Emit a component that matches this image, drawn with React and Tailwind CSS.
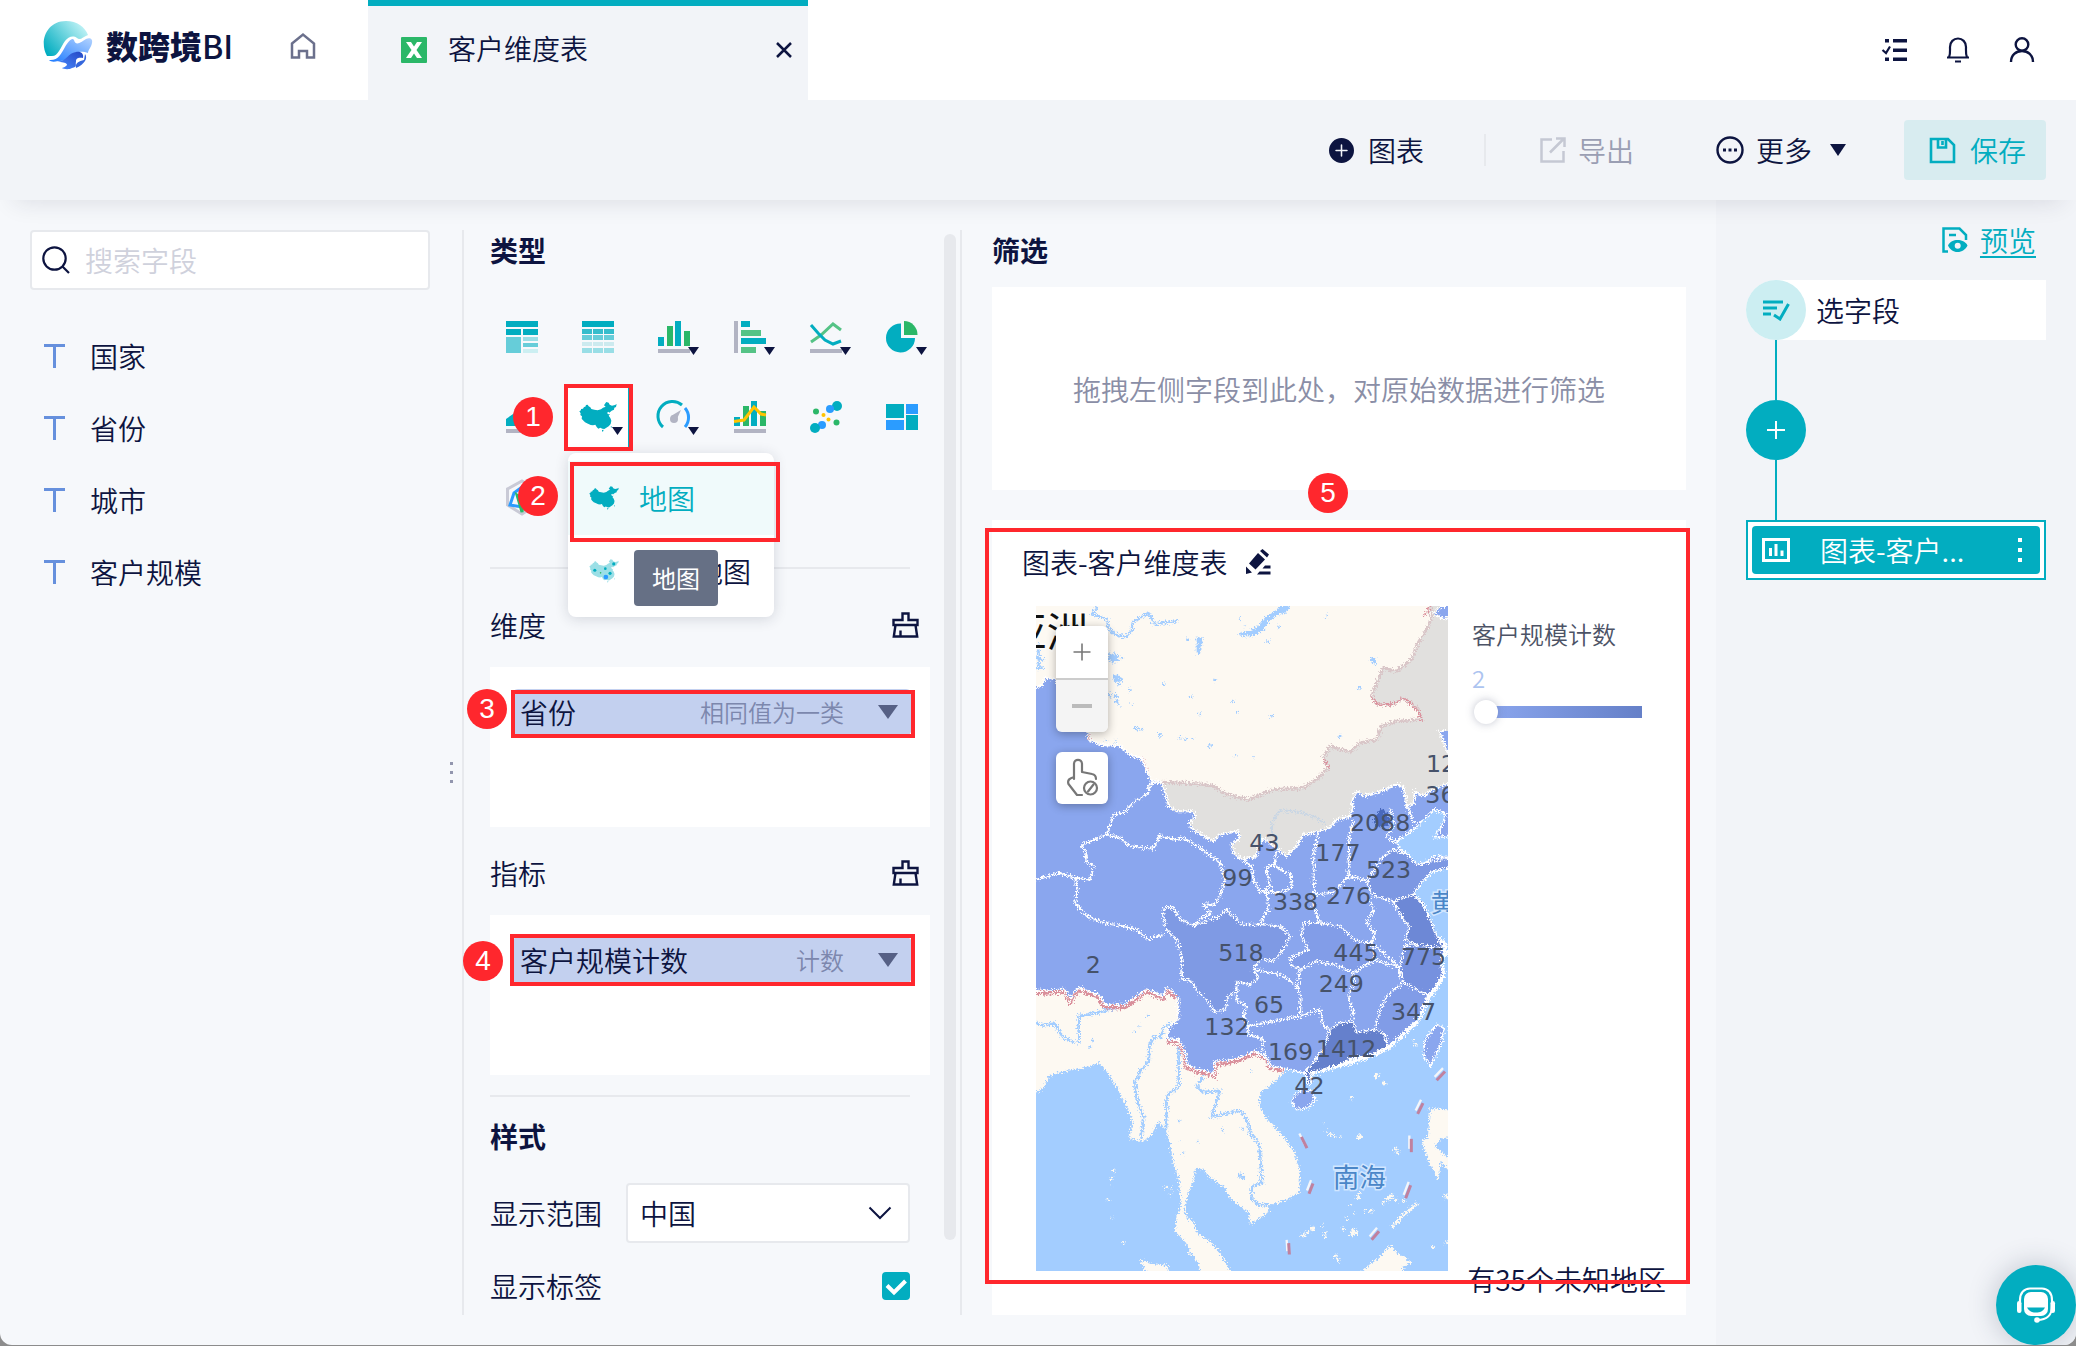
import React, { useState } from "react"
import { BsPlusCircleFill } from "react-icons/bs"

const fields = ["国家", "省份", "城市", "客户规模"]

const CHINA =
	"M1 28 L6 25 L6 21 L12 20 L15 15 L19 14 L21 9 L26 8 L29 13 L34 16 L37 21 L46 23 L56 25 L66 22 L72 17 L80 14 L75 10 L79 4 L82 0 L89 2 L92 8 L99 11 L108 9 L113 6 L111 15 L106 17 L105 23 L98 26 L91 32 L88 29 L84 33 L88 37 L93 36 L89 41 L94 48 L97 56 L95 66 L89 73 L82 77 L76 81 L70 80 L64 77 L58 80 L53 75 L49 68 L42 70 L35 69 L27 65 L18 61 L12 55 L8 50 L9 43 L4 39 L5 34 Z M69 84 L74 83 L72 89 L69 88 Z M95 74 L98 71 L97 79 Z"

function ChinaIcon({ className, dots }) {
	return (
		<svg viewBox="0 0 114 90" className={className}>
			<path d={CHINA} fill={dots ? "#9bdfe6" : "#02adc0"} />
			{dots && (
				<g fill="#02adc0">
					<circle cx="22" cy="42" r="6" />
					<circle cx="62" cy="36" r="5" />
					<circle cx="94" cy="18" r="6" />
					<circle cx="80" cy="54" r="6" />
					<circle cx="64" cy="68" r="9" fill="#2b9cff" />
					<circle cx="44" cy="52" r="3" fill="#2bb768" />
				</g>
			)}
		</svg>
	)
}

const chartTypes = [
	{
		name: "分组表",
		art: (
			<>
				<path fill="#02adc0" d="M0 0h32v6H0zM0 8h15v6H0zM17 8h15v6H17z" />
				<path fill="#66cdd9" d="M0 16h15v16H0zM17 22h15v4H17z" />
				<path fill="#99dee6" d="M17 16h15v4H17z" />
				<path fill="#cceff2" d="M17 28h15v4H17z" />
			</>
		),
	},
	{
		name: "明细表",
		art: (
			<>
				<path fill="#02adc0" d="M0 0h32v6H0z" />
				<path fill="#35bdcc" d="M0 8h10v5H0zM11 8h10v5H11zM22 8h10v5H22z" />
				<path fill="#66cdd9" d="M0 14h10v5H0zM11 14h10v5H11zM22 14h10v5H22z" />
				<path fill="#cceaef" d="M0 21h10v4H0zM11 21h10v4H11zM22 21h10v4H22z" />
				<path fill="#99dee6" d="M0 27h10v5H0zM11 27h10v5H11zM22 27h10v5H22z" />
			</>
		),
	},
	{
		name: "柱状图",
		menu: true,
		art: (
			<>
				<path fill="#02adc0" d="M0 16h6v9H0zM17 0h6v25h-6z" />
				<path fill="#2bb768" d="M9 5h6v20H9zM26 10h6v15h-6z" />
				<path fill="#b2b4c3" d="M0 28h32v4H0z" />
			</>
		),
	},
	{
		name: "条形图",
		menu: true,
		art: (
			<>
				<path fill="#b2b4c3" d="M0 0h4v32H0z" />
				<path fill="#02adc0" d="M7 0h9v6H7zM7 17h25v6H7z" />
				<path fill="#55c386" d="M7 9h20v6H7zM7 26h15v6H7z" />
			</>
		),
	},
	{
		name: "折线图",
		menu: true,
		art: (
			<>
				<path d="M1 21L11 14L23 3L31 9" fill="none" stroke="#55c386" strokeWidth="3" />
				<path d="M1 4L8 12L15 19L23 23L31 20" fill="none" stroke="#02adc0" strokeWidth="3" />
				<path fill="#b2b4c3" d="M0 28h32v4H0z" />
			</>
		),
	},
	{
		name: "饼图",
		menu: true,
		art: (
			<>
				<path fill="#02adc0" d="M15 2.500V17H29A14.500 14.500 0 1 1 15 2.500z" />
				<path fill="#2bb768" d="M18 0A13.500 13.500 0 0 1 31.500 14H18z" />
			</>
		),
	},
	{
		name: "面积图",
		art: (
			<>
				<path fill="#02adc0" d="M0 25V18L10 11L20 16L32 8V25z" />
				<path fill="#b2b4c3" d="M0 28h32v4H0z" />
			</>
		),
	},
	{ name: "地图", menu: true, active: true },
	{
		name: "仪表盘",
		menu: true,
		art: (
			<g fill="none" strokeWidth="3">
				<path d="M5 26A14.500 14.500 0 0 1 24 4" stroke="#02adc0" />
				<path d="M27 7A14.500 14.500 0 0 1 27 26" stroke="#2b9cff" />
				<path d="M13 15L23 9L18 20z" fill="#b2b4c3" />
				<circle cx="16" cy="18" r="4" fill="#b2b4c3" />
			</g>
		),
	},
	{
		name: "组合图",
		art: (
			<>
				<path fill="#02adc0" d="M0 16h6v9H0zM17 0h6v25h-6z" />
				<path fill="#2bb768" d="M9 5h6v20H9zM26 10h6v15h-6z" />
				<path d="M0 20.500L10 19L20 6L27 13L32 14" fill="none" stroke="#ffc300" strokeWidth="3" />
				<path fill="#b2b4c3" d="M0 28h32v4H0z" />
			</>
		),
	},
	{
		name: "散点图",
		art: (
			<>
				<circle cx="27" cy="5" r="5" fill="#02adc0" />
				<circle cx="20" cy="8" r="4" fill="#2b9cff" />
				<circle cx="6" cy="10.500" r="3" fill="#2bb768" />
				<circle cx="13.500" cy="14" r="2" fill="#ffc300" />
				<circle cx="18.500" cy="18.500" r="2" fill="#ffc300" />
				<circle cx="26.500" cy="21.500" r="3" fill="#2bb768" />
				<circle cx="12" cy="24" r="4" fill="#2b9cff" />
				<circle cx="5" cy="27" r="5" fill="#02adc0" />
			</>
		),
	},
	{
		name: "矩形树图",
		art: (
			<>
				<path fill="#02adc0" d="M0 3h18v14H0zM20 14h12v15H20z" />
				<path fill="#2b9cff" d="M20 3h12v10H20zM0 19h18v10H0z" />
			</>
		),
	},
	{
		name: "雷达图",
		art: (
			<g fill="none" strokeWidth="3">
				<path d="M16 0L30 8V24L16 33L1.500 24V8z" stroke="#c9cad6" />
				<path d="M16 6L25 16L16 26L4 24L8 12z" stroke="#2b9cff" />
				<path d="M11 14L18 18L16 31z" stroke="#2bb768" />
			</g>
		),
	},
]

function Marker({ n, className }) {
	return (
		<span
			className={`absolute z-40 flex h-10 w-10 items-center justify-center rounded-full bg-[#ff272d] font-['Liberation_Sans',sans-serif] text-[28px] leading-none text-white ${className}`}
		>
			{n}
		</span>
	)
}

function Frame({ className }) {
	return <span className={`pointer-events-none absolute z-30 border-4 border-[#ff272d] ${className}`} />
}

function Logo() {
	return (
		<svg viewBox="0 0 52 50" className="h-[50px] w-[52px]">
			<defs>
				<linearGradient id="sky" x1="0" y1="0.8" x2="0.9" y2="0.2">
					<stop offset="0" stopColor="#02adc0" />
					<stop offset="1" stopColor="#b9f0f4" />
				</linearGradient>
				<linearGradient id="wave" x1="0" y1="1" x2="1" y2="0">
					<stop offset="0" stopColor="#1e7bff" />
					<stop offset="1" stopColor="#b3d3ff" />
				</linearGradient>
				<linearGradient id="deep" x1="0" y1="1" x2="1" y2="0">
					<stop offset="0" stopColor="#4a8cff" />
					<stop offset="1" stopColor="#2447c4" />
				</linearGradient>
			</defs>
			<path d="M5 36C-3 22 4 1 24 1C35 1 43 7 46 15C41 17 38 21 35 18C31 15 26 17 23 21C18 28 16 37 9 36Z" fill="url(#sky)" />
			<path d="M7 40C16 41 19 34 23 27C26 22 30 17 32 20C34 27 39 22 44 19C48 17 51 19 50 23C49 28 46 30 46 33C41 31 34 31 30 35C27 39 22 41 16 41C12 42 9 42 7 40Z" fill="url(#wave)" />
			<path d="M15 42C25 41 26 33 34 32C39 31 42 34 41 38C34 37 34 40 34 42C33 44 36 47 30 48C27 50 21 49 20 48C29 45 25 42 15 42Z" fill="url(#deep)" />
			<path d="M43 34C46 38 43 44 34 48C33 43 37 41 42 40Z" fill="#3567dc" />
		</svg>
	)
}

function Header() {
	return (
		<header className="flex h-[100px] shrink-0 items-stretch bg-white">
			<a href="#home" className="flex w-[247px] items-center pb-2.5 pl-[42px]">
				<Logo />
				<span className="ml-3 text-[32px] leading-10 font-black">
					数跨境<span className="font-medium">BI</span>
				</span>
			</a>
			<button aria-label="首页" className="flex w-[121px] items-center pb-2 pl-[42px]">
				<svg viewBox="0 0 28 28" className="h-7 w-7" fill="none" stroke="#6b708c" strokeWidth="2.500">
					<path d="M3 11.500L14 2.500L25 11.500V25.500H18V19H10V25.500H3z" />
				</svg>
			</button>
			<div className="flex w-[440px] items-center border-t-[6px] border-[#02adc0] bg-[#f2f4f8] pr-4 pb-2.5 pl-[33px]">
				<svg viewBox="0 0 26 26" className="mt-1 h-[26px] w-[26px]">
					<rect width="26" height="26" rx="1" fill="#2bb768" />
					<path d="M5 5H10L13 9.500L16 5H21L15.500 13L21 21H16L13 16.500L10 21H5L10.500 13z" fill="#fff" />
				</svg>
				<span className="ml-[21px] flex-1 text-[28px] leading-10">客户维度表</span>
				<button aria-label="关闭" className="mt-1">
					<svg viewBox="0 0 16 16" className="h-4 w-4" stroke="#0d1440" strokeWidth="2.500">
						<path d="M1 1L15 15M15 1L1 15" />
					</svg>
				</button>
			</div>
			<nav className="ml-auto flex items-center gap-9 pr-10">
				<button aria-label="任务">
					<svg viewBox="0 0 28 28" className="h-7 w-7" fill="#0d1440">
						<path d="M13 3h14v3.500H13zM13 12.500h14V16H13zM13 21.500h14V25H13zM5 3h4v3.500H5zM5 21.500h4V25H5z" />
						<path d="M2.500 14L6 17L10 10.500" fill="none" stroke="#0d1440" strokeWidth="2.200" />
					</svg>
				</button>
				<button aria-label="通知">
					<svg viewBox="0 0 28 28" className="h-7 w-7" fill="none" stroke="#0d1440" strokeWidth="2.200">
						<path d="M3 21.500H25M5 21.500C6.500 18 6 15 6 11C6 6 9.500 2.500 14 2.500S22 6 22 11C22 15 21.500 18 23 21.500M11 25.500H17" />
					</svg>
				</button>
				<button aria-label="账户">
					<svg viewBox="0 0 28 28" className="h-7 w-7" fill="none" stroke="#0d1440" strokeWidth="2.400">
						<circle cx="14" cy="8.500" r="6.300" />
						<path d="M3 26C3 19 8 15 14 15S25 19 25 26" />
					</svg>
				</button>
			</nav>
		</header>
	)
}

function Toolbar() {
	return (
		<div className="relative z-10 flex h-[100px] shrink-0 items-center justify-end bg-[#f2f4f8] pr-[30px] text-[28px] leading-10 shadow-[0_16px_24px_-14px_rgba(30,35,60,0.12)]">
			<button className="flex items-center gap-3.5">
				<BsPlusCircleFill size={25} />
				图表
			</button>
			<span className="mr-[54px] ml-[60px] h-8 w-0.5 bg-[#e7e9ed]" />
			<button disabled className="flex items-center gap-3 text-[#9a9eb3]">
				<svg viewBox="0 0 26 26" className="h-[26px] w-[26px]" fill="none" stroke="#c5c8d3" strokeWidth="2.500">
					<path d="M12 2.500H1.500V24.500H23.500V14M10 15.500L23 2.500M16 1.500H24.500V10" />
				</svg>
				导出
			</button>
			<button className="ml-[82px] flex items-center">
				<svg viewBox="0 0 28 28" className="mr-3 h-7 w-7" fill="none" stroke="#0d1440" strokeWidth="2.400">
					<circle cx="14" cy="14" r="12.500" />
					<path d="M7 14h3M12.500 14h3M18 14h3" strokeWidth="3" />
				</svg>
				更多
				<svg viewBox="0 0 16 12" className="ml-[18px] h-3 w-4" fill="#0d1440">
					<path d="M0 0H16L8 12z" />
				</svg>
			</button>
			<button className="ml-[58px] flex h-[60px] w-[142px] items-center gap-3.5 rounded bg-[#d8ecf0] pl-[25px] text-[#02adc0]">
				<svg viewBox="0 0 27 27" className="h-[27px] w-[27px]" fill="none" stroke="#02adc0" strokeWidth="2.600">
					<path d="M2 2H19L25 8V25H2zM9 2V10.500H17V2M13.500 4V8" />
				</svg>
				保存
			</button>
		</div>
	)
}

function FieldPanel() {
	return (
		<aside className="relative w-[462px] shrink-0 pt-[30px] pr-8 pl-[30px]">
			<label className="flex h-[60px] items-center rounded border-2 border-[#e7e9ed] bg-white pl-2.5">
				<svg viewBox="0 0 28 28" className="h-7 w-7 shrink-0" fill="none" stroke="#0d1440" strokeWidth="2.200">
					<circle cx="12.500" cy="12.500" r="11.200" />
					<path d="M20.500 20.500L27 27" />
				</svg>
				<input
					aria-label="搜索字段"
					placeholder="搜索字段"
					className="ml-[15px] w-full bg-transparent text-[28px] leading-10 outline-none placeholder:text-[#cfd1dc]"
				/>
			</label>
			<ul className="mt-[30px]">
				{fields.map((f) => (
					<li key={f} className="flex h-[72px] items-center gap-[25px] pl-3.5 text-[28px] leading-10">
						<svg viewBox="0 0 21 24" className="h-6 w-[21px]" fill="none" stroke="#6690dd" strokeWidth="3">
							<path d="M0 1.500H21M10.500 1.500V24" />
						</svg>
						{f}
					</li>
				))}
			</ul>
			<span className="absolute top-[562px] right-[9px] flex flex-col gap-1.5 text-[#9296ae]">
				<i className="h-[3px] w-[3px] bg-current" />
				<i className="h-[3px] w-[3px] bg-current" />
				<i className="h-[3px] w-[3px] bg-current" />
			</span>
		</aside>
	)
}

function MapMenu() {
	return (
		<div className="absolute top-[68px] left-0.5 z-20 w-[206px] rounded-lg bg-white pt-2 pb-2.5 text-[28px] leading-10 shadow-[0_2px_14px_rgba(30,35,60,0.16)]">
			<button className="flex h-[74px] w-full items-center gap-5 bg-[#f0fafb] pl-[21px] text-[#02adc0]">
				<ChinaIcon className="h-6 w-[30px]" />
				地图
			</button>
			<button className="flex h-[72px] w-full items-center gap-5 pl-[21px]">
				<ChinaIcon className="h-6 w-[30px]" dots />
				气泡地图
			</button>
			<span
				role="tooltip"
				className="absolute top-[97px] left-[66px] flex h-14 w-[84px] items-center justify-center rounded bg-[#667085] text-2xl font-normal text-white"
			>
				地图
			</span>
			<Frame className="top-[9px] -right-1.5 left-0.5 h-20" />
		</div>
	)
}

function TypeGrid() {
	return (
		<div className="relative mt-[35px] grid grid-cols-[repeat(6,64px)] gap-x-3 gap-y-4">
			{chartTypes.map((t) => (
				<div key={t.name} className="relative h-16">
					<button
						aria-label={t.name}
						className={`flex h-16 w-16 items-center justify-center border-2 ${t.active ? "border-[#02adc0] bg-white" : "border-transparent"}`}
					>
						{t.active ? (
							<ChinaIcon className="h-[30px] w-[38px]" />
						) : (
							<svg viewBox="0 0 32 32" className="h-8 w-8 overflow-visible">
								{t.art}
							</svg>
						)}
					</button>
					{t.menu && (
						<svg viewBox="0 0 11 8" className="absolute top-[42px] left-[46px] h-2 w-[11px]" fill="#0d1440">
							<path d="M0 0H11L5.500 8z" />
						</svg>
					)}
					{t.active && (
						<>
							<Frame className="-top-px -right-[3px] -bottom-0.5 -left-0.5" />
							<MapMenu />
						</>
					)}
				</div>
			))}
			<Marker n={1} className="top-[92px] left-[23px]" />
			<Marker n={2} className="top-[171px] left-7" />
		</div>
	)
}

function DropZone({ title, field, method, children, className }) {
	return (
		<section className={className}>
			<div className="flex items-center justify-between pr-[11px]">
				<h3 className="text-[28px] leading-10">{title}</h3>
				<button aria-label={`清空${title}`}>
					<svg viewBox="0 0 27 26" className="h-[26px] w-[27px]" fill="none" stroke="#0d1440" strokeWidth="2.400">
						<path d="M10.500 8V1.500H16.500V8H25.500V13H1.500V8zM3.500 13L1.800 24.500H25.200L23.500 13M8.500 24V18.500" />
					</svg>
				</button>
			</div>
			<div className="mt-[22px] h-40 bg-white pt-[22px] pr-[18px] pl-[22px]">
				<div className="relative">
					<button className="flex h-[46px] w-full items-center rounded-md bg-[#c3d0ef] pr-3.5 pl-2">
						<span className="flex-1 text-left text-[28px] leading-10">{field}</span>
						<span className="text-2xl text-[#7c87ad]">{method}</span>
						<svg viewBox="0 0 20 14" className="ml-[34px] h-3.5 w-5" fill="#566085">
							<path d="M0 0H20L10 14z" />
						</svg>
					</button>
					{children}
				</div>
			</div>
		</section>
	)
}

function ConfigPanel() {
	const [range, setRange] = useState("中国")
	const [showLabel, setShowLabel] = useState(true)

	return (
		<section className="relative my-[30px] w-[500px] shrink-0 border-x-2 border-[#e7e9ed] pr-[30px] pl-[26px]">
			<h2 className="text-[28px] leading-10 font-bold">类型</h2>
			<TypeGrid />
			<hr className="mt-[38px] mr-5 border-t-2 border-[#e7e9ed]" />

			<DropZone title="维度" field="省份" method="相同值为一类" className="mt-9">
				<Frame className="top-px -right-[3px] -bottom-[3px] -left-px" />
				<Marker n={3} className="top-0 -left-[45px]" />
			</DropZone>
			<DropZone title="指标" field="客户规模计数" method="计数" className="mt-[26px]">
				<Frame className="-top-[3px] -right-[3px] -bottom-[3px] -left-0.5" />
				<Marker n={4} className="top-1 -left-[49px]" />
			</DropZone>

			<hr className="mt-5 mr-5 border-t-2 border-[#e7e9ed]" />
			<h2 className="mt-[19px] text-[28px] leading-10 font-bold">样式</h2>
			<div className="mt-[27px] mr-5 flex items-center justify-between">
				<label htmlFor="range" className="text-[28px] leading-10">
					显示范围
				</label>
				<div className="relative">
					<select
						id="range"
						value={range}
						onChange={(e) => setRange(e.target.value)}
						className="block h-[60px] w-[284px] appearance-none rounded border-2 border-[#e7e9ed] bg-white pl-3 text-[28px] leading-10"
					>
						<option>中国</option>
						<option>世界</option>
					</select>
					<svg
						viewBox="0 0 24 14"
						className="pointer-events-none absolute top-[23px] right-[18px] h-3.5 w-6"
						fill="none"
						stroke="#0d1440"
						strokeWidth="2"
					>
						<path d="M1.500 1.500L12 12L22.500 1.500" />
					</svg>
				</div>
			</div>
			<div className="mt-[23px] mr-5 flex items-center justify-between">
				<label htmlFor="show-label" className="text-[28px] leading-10">
					显示标签
				</label>
				<div className="relative">
					<input
						id="show-label"
						type="checkbox"
						checked={showLabel}
						onChange={(e) => setShowLabel(e.target.checked)}
						className="block h-7 w-7 appearance-none rounded border-2 border-[#02adc0] bg-white checked:bg-[#02adc0]"
					/>
					<svg
						viewBox="0 0 28 28"
						className="pointer-events-none absolute inset-0 h-7 w-7"
						fill="none"
						stroke="#fff"
						strokeWidth="4"
					>
						<path d="M5 13.500L12 20.500L23.500 9" />
					</svg>
				</div>
			</div>
			<span className="absolute top-1 right-1 bottom-[75px] w-3 rounded-full bg-[#e7e9ed]" />
		</section>
	)
}

const labels = [
	[1218, 546, "12"],
	[1216, 639, "36"],
	[990, 724, "2088"],
	[688, 783, "43"],
	[886, 813, "177"],
	[1038, 866, "523"],
	[607, 890, "99"],
	[918, 944, "276"],
	[759, 962, "338"],
	[595, 1115, "518"],
	[940, 1115, "445"],
	[1143, 1127, "775"],
	[197, 1151, "2"],
	[896, 1206, "249"],
	[702, 1269, "65"],
	[1113, 1290, "347"],
	[553, 1335, "132"],
	[888, 1401, "1412"],
	[744, 1412, "169"],
	[823, 1514, "42"],
]

// dashes of the sea border: x1, y1, x2, y2
const seaDashes = [
	[1250, 1472, 1275, 1446],
	[1193, 1573, 1209, 1541],
	[1174, 1648, 1174, 1688],
	[1157, 1826, 1172, 1787],
	[1055, 1951, 1077, 1925],
	[806, 1961, 808, 1995],
	[867, 1813, 879, 1782],
	[844, 1642, 861, 1676],
]

const lakes = [
	[281, 205, 14], [306, 205, 4], [290, 266, 10], [300, 270, 7], [298, 284, 4], [270, 318, 7], [288, 320, 7], [290, 335, 5],
	[328, 301, 4], [333, 344, 3], [298, 345, 3], [430, 284, 4], [502, 151, 4], [586, 271, 4], [514, 320, 4], [640, 337, 4],
	[652, 367, 4], [538, 374, 4], [755, 380, 4], [743, 156, 4], [918, 79, 4], [676, 108, 3], [660, 86, 3], [778, 112, 4],
	[1060, 213, 8], [1066, 222, 5], [1016, 295, 6], [960, 440, 4], [350, 418, 6], [366, 420, 4], [420, 436, 6], [480, 446, 4],
	[496, 451, 4], [520, 446, 3], [570, 469, 6], [647, 499, 3], [700, 506, 3], [255, 452, 4], [286, 458, 4], [382, 1277, 4],
	[358, 1308, 3], [218, 1352, 4], [346, 1326, 3], [478, 1594, 4], [478, 1656, 3], [533, 1656, 3], [610, 1622, 5], [667, 1617, 4],
	[490, 1690, 4], [660, 1757, 8], [672, 1765, 6], [696, 1446, 3], [210, 1374, 4],
]

const islets = [
	[1070, 1459, 8], [1093, 1482, 6], [994, 1526, 4], [912, 1598, 3], [932, 1636, 6], [944, 1640, 5], [1018, 1642, 8], [921, 1626, 4],
	[962, 1642, 4], [1128, 1680, 6], [1133, 1690, 5], [1018, 1812, 5], [1014, 1823, 6], [1090, 1840, 5], [1115, 1820, 6], [1104, 1828, 6],
	[1128, 1832, 4], [1152, 1834, 5], [1052, 1864, 6], [1036, 1862, 3], [993, 1846, 3], [980, 1890, 4], [1000, 1874, 3], [970, 1918, 5],
	[915, 1930, 5], [916, 1942, 4], [877, 1918, 7], [862, 1930, 6], [850, 1938, 6], [910, 1908, 4], [1003, 1927, 9], [995, 1935, 6],
	[948, 2000, 5], [954, 2012, 5], [1188, 1366, 5], [282, 1742, 5], [276, 1766, 4], [275, 1790, 3], [264, 1831, 4], [310, 1960, 4],
	[274, 1885, 3], [437, 1793, 4], [455, 1797, 4], [452, 1814, 3], [508, 1993, 4], [1280, 1820, 7], [1276, 1960, 5], [1238, 1974, 5],
	[1180, 1350, 3], [312, 1512, 6], [302, 1524, 4], [50, 1452, 3],
]

function MapDrawing() {
	return (
		<svg viewBox="48 48 1236 1998" preserveAspectRatio="xMidYMid slice" className="absolute inset-0 h-full w-full font-normal">
			<defs>
				<filter id="coast" x="0" y="0" width="100%" height="100%">
					<feTurbulence type="fractalNoise" baseFrequency="0.2" numOctaves="2" seed="4" />
					<feDisplacementMap in="SourceGraphic" scale="24" xChannelSelector="R" yChannelSelector="G" />
				</filter>
			</defs>
			<rect x="48" y="48" width="1236" height="1998" fill="#a3cdff" />
			<g filter="url(#coast)">
				<path d="M20 20H1310V700H1100V900H20z" fill="#fdf9f2" />
				{/* rivers and lakes of the north */}
				<g fill="none" stroke="#a3cdff" strokeWidth="7">
					<path d="M232 52L215 75L240 80L265 95L262 110L275 130L315 142L335 125L338 98L385 70L405 104L475 95" />
					<path d="M265 190L268 215M56 160V236M48 205L72 212M48 236L72 234" />
				</g>
				<path d="M650 132L685 124L715 110L735 84L760 68L780 50L815 42L800 68L775 76L745 98L728 124L700 140L670 140z" fill="#a3cdff" />
				<path d="M530 145L548 143L546 172L538 196L530 190z" fill="#a3cdff" />

				{/* Indochina */}
				<path
					d="M20 1180H800L792 1450L750 1490L722 1508L718 1550L740 1588L790 1640L825 1690L840 1750L838 1808L800 1830L745 1850L750 1865L715 1888L690 1906L687 1870L660 1850L630 1825L615 1795L570 1765L550 1740L525 1736L522 1770L505 1810L493 1860L500 1885L520 1895L530 1930L570 1955L600 1990L640 2060H545L535 2020L510 1985L498 1960L465 1925L470 1880L483 1850L475 1760L460 1720L450 1660L437 1622L415 1596L395 1635L368 1656L328 1646L338 1600L325 1560L300 1510L270 1460L238 1420L190 1436L130 1445L85 1460L75 1490L20 1530z"
					fill="#fdf9f2"
				/>
				<path d="M360 2010L400 2024L440 2028L452 2060H385L368 2030z" fill="#fdf9f2" />
				<path d="M1010 2060L1050 2024L1072 2010L1110 1966L1130 1990L1178 2020L1148 2030L1155 2060z" fill="#fdf9f2" />
				<path d="M1230 1556L1300 1560V1640L1262 1648L1245 1672L1284 1704L1300 1760L1262 1716L1256 1774L1228 1720L1205 1655L1224 1640z" fill="#fdf9f2" />
				<path d="M1115 1915L1150 1876L1192 1842" stroke="#fdf9f2" strokeWidth="9" fill="none" />
				<g fill="none" stroke="#a3cdff" strokeWidth="8">
					<path d="M176 1362V1280L230 1270L300 1252L340 1228L375 1212" />
					<path d="M48 1300L70 1308L104 1302L125 1340L162 1358" />
					<path d="M452 1300L430 1315L424 1342L400 1345L388 1370L386 1420L362 1442L346 1480L350 1530L370 1580L364 1650" />
					<path d="M476 1352V1490L440 1520L438 1622" />
					<path d="M550 1460L530 1490L548 1508L600 1504L575 1582L660 1562L685 1600L690 1630L718 1665L726 1780L695 1792L694 1826L715 1846L760 1848" />
				</g>

				{/* areas without data */}
				<path
					d="M425 578L540 583L580 590L620 615L685 630L760 600L850 595L890 570L925 535L910 505L930 470L990 487L1020 460L1070 450L1085 410L1130 395L1203 390L1195 360L1150 325L1120 345L1070 345L1055 320L1070 280L1090 235L1130 245L1175 210L1190 170L1225 110L1235 85L1225 30L1310 20V700H1100V860H425z"
					fill="#e1e0de"
					stroke="#d9c6c8"
					strokeWidth="8"
				/>
				<path d="M1055 322L1072 345L1120 343L1150 324L1195 365L1203 392M912 508L928 535M206 430L210 452M366 506L388 560M1212 78L1232 50" fill="none" stroke="#dc8f9b" strokeWidth="5" />
				<path d="M755 730L757 700L780 662L830 666L880 680L915 702" fill="none" stroke="#c9d6e4" strokeWidth="6" />

				{/* border shadow of the south */}
				<path
					d="M48 1212L135 1207L150 1238L175 1202L235 1222L255 1254H315L345 1232L380 1207L430 1228L440 1202L470 1225M440 1358L475 1358L492 1390L498 1432L530 1447L585 1460V1424L620 1422L660 1412L705 1392L740 1410L750 1436L790 1444"
					fill="none"
					stroke="#d98f9b"
					strokeWidth="10"
				/>

				{/* provinces */}
				<path
					d="M20 300L65 290L75 265L105 268L140 310L170 400L205 430L205 450L240 466L300 470L330 495L365 507L392 572L425 578L440 625L445 650L470 665L520 665L525 685L505 700L520 720L560 745L580 755L600 735L655 725L660 745L635 765L640 790L665 810L710 800L715 770L730 745L760 770L800 800L830 770L850 735L880 730L930 715L950 690L990 682L1000 650L995 640L1010 605L1030 620L1080 606L1130 585L1150 592L1160 650L1180 645L1185 605L1210 620L1240 600L1310 570V830L1235 845L1200 882L1180 915L1210 945L1230 990L1250 1040L1275 1060L1280 1090L1265 1120L1270 1155L1255 1185L1230 1215L1215 1250L1195 1290L1160 1325L1120 1360L1085 1390L1040 1400L1000 1405L960 1425L900 1445L870 1450L875 1480L860 1480L855 1450L810 1440L750 1430L740 1405L705 1385L660 1405L620 1415L585 1415L580 1455L560 1445L530 1440L500 1425L495 1390L475 1350L440 1350L445 1315L475 1290L475 1225L455 1205L440 1195L430 1220L380 1200L345 1225L315 1246L255 1245L235 1215L175 1195L150 1230L135 1200L20 1205z"
					fill="#8aa6ee"
					stroke="#fff"
					strokeWidth="6"
				/>
				<g stroke="#fff" strokeWidth="5">
					<path d="M435 1015L430 955L460 955L480 990L520 1010L600 980L620 960L665 1005L720 1005L780 1010L810 1040L790 1080L760 1115L720 1110L700 1140L715 1165L690 1185L650 1175L650 1205L625 1220L615 1260L585 1268L560 1230L530 1200L510 1170L487 1172L485 1100L470 1050z" fill="#7f9ae4" />
					<path d="M1040 880L1080 810L1120 780L1165 795L1190 825L1215 820L1310 800V832L1235 845L1200 885L1180 915L1120 935L1060 920z" fill="#7d98e3" />
					<path d="M1120 935L1180 915L1210 945L1230 990L1250 1040L1275 1060L1265 1075L1200 1070L1155 1050L1170 1010L1150 990z" fill="#6d88d6" />
					<path d="M1155 1065L1200 1070L1265 1075L1275 1100L1265 1120L1270 1155L1255 1185L1225 1215L1200 1205L1150 1180L1140 1135z" fill="#7691df" />
					<path d="M850 1000L900 1000L960 1010L1010 1055L1055 1060L1065 1110L1000 1150L960 1130L890 1115L840 1140L815 1130L810 1105L865 1080L845 1040z" fill="#829de8" />
					<path d="M1150 1180L1200 1205L1225 1217L1195 1290L1160 1325L1100 1372L1095 1335L1065 1320L1080 1260L1100 1220z" fill="#819ce7" />
					<path d="M930 1320L960 1300L1000 1297L1010 1330L1065 1320L1095 1335L1100 1370L1085 1390L1040 1400L1000 1405L960 1425L900 1445L870 1450L875 1480L860 1480L858 1440L880 1420L915 1370z" fill="#6580cc" />
					<path d="M1250 1305L1272 1315L1265 1360L1245 1400L1232 1430L1210 1395L1215 1350z" fill="#8aa6ee" />
					<path d="M850 1500L880 1505L885 1530L865 1555L830 1560L815 1535L825 1515z" fill="#8aa6ee" />
					<path d="M1240 72L1265 50L1310 50V80L1270 88z" fill="#8aa6ee" />
					<path d="M1258 425L1310 425V490L1284 490L1270 455z" fill="#8aa6ee" />
				</g>
				<path d="M1086 655L1110 682L1102 712L1068 714L1060 690z" fill="#4a69bd" />
				<g fill="none" stroke="#fff" strokeWidth="6" strokeLinejoin="round">
					<path d="M425 578L390 582L385 610L340 640L310 670L280 675L260 735L185 767L200 790L196 815L222 830L210 870L165 865L120 850L48 870" />
					<path d="M260 735L300 745L330 770L400 778L420 738L460 750L490 745L540 775L600 820L615 870L600 920L585 945L550 945L572 972L545 985L520 1010" />
					<path d="M165 865L172 900L165 940L200 980L250 1000L310 1010L350 1020L385 1050L430 1035" />
					<path d="M665 810L695 830L700 870L722 910L750 890L738 835L765 822L768 785M765 830L812 855L815 895L770 910L740 905L745 960L720 1004" />
					<path d="M895 730L880 800L882 915L880 945L900 1000M882 915L940 910L985 860L1042 872M1000 690L988 745L985 858" />
					<path d="M1055 1060L1065 1030L1040 1000L1062 960L1050 930M1120 935L1150 990M1055 1060L1130 1125L1150 1180M1065 1110L1140 1135" />
					<path d="M700 1140L780 1155L805 1170L832 1195L840 1140M650 1205L650 1232L678 1250L670 1280L685 1310L760 1295L840 1280L842 1220L832 1195" />
					<path d="M685 1310L682 1332L732 1350L725 1375L740 1405M840 1280L900 1260L910 1310L930 1320" />
					<path d="M1000 1150L1002 1180L985 1220L1000 1270L1000 1300M1110 655L1122 705L1098 740L1130 760M1160 650L1190 715" />
				</g>
				<path d="M1245 660L1276 672L1270 700L1245 745L1310 738V800L1240 802L1215 820L1190 825L1165 795L1135 772L1130 755L1180 720L1210 690z" fill="#a3cdff" stroke="#fff" strokeWidth="5" />
				<g fill="none" stroke="#fff" strokeWidth="11" strokeLinejoin="round">
					<path d="M1255 1050L1278 1068L1266 1120L1270 1160L1250 1192L1222 1232L1195 1292L1150 1335L1100 1378L1040 1404L950 1432L870 1452" />
				</g>
				<g fill="#a3cdff">
					{lakes.map(([x, y, r]) => (
						<circle key={`${x}-${y}`} cx={x} cy={y} r={r} />
					))}
				</g>
				<g fill="#fdf9f2">
					{islets.map(([x, y, r]) => (
						<circle key={`${x}-${y}`} cx={x} cy={y} r={r} />
					))}
				</g>
			</g>
			{seaDashes.map(([x1, y1, x2, y2]) => (
				<g key={x1} strokeWidth="9">
					<line x1={x1 - 6} y1={y1 - 10} x2={x2 - 6} y2={y2 - 10} stroke="#f4f6fa" strokeWidth="7" />
					<line x1={x1} y1={y1} x2={x2} y2={y2} stroke="#c0819f" />
				</g>
			))}
			<g className="font-['Noto_Sans_CJK_SC',sans-serif]" paintOrder="stroke" stroke="#fff" strokeOpacity="0.5">
				<text x="-44" y="172" fontSize="124" fill="#111" strokeWidth="10">
					亚洲
				</text>
				<text x="938" y="1792" fontSize="80" fill="#4a86c8" strokeWidth="9">
					南海
				</text>
				<text x="1232" y="966" fontSize="76" fill="#4a86c8" strokeWidth="9">
					黄海
				</text>
			</g>
			<g className="font-['DejaVu_Sans',sans-serif]" fontSize="71" fill="#46526a">
				{labels.map(([x, y, n]) => (
					<text key={n} x={x} y={y}>
						{n}
					</text>
				))}
			</g>
		</svg>
	)
}

function RegionMap() {
	return (
		<div className="relative flex-1 overflow-hidden">
			<MapDrawing />
			<div className="absolute top-5 left-5 w-[52px]">
				<div className="overflow-hidden rounded-md shadow-[0_2px_10px_rgba(0,0,0,0.3)]">
					<button aria-label="放大" className="flex h-[52px] w-full items-center justify-center bg-white">
						<svg viewBox="0 0 18 18" className="h-[18px] w-[18px]" stroke="#777" strokeWidth="1.600">
							<path d="M9 0.500V17.500M0.500 9H17.500" />
						</svg>
					</button>
					<button
						aria-label="缩小"
						className="flex h-[54px] w-full items-center justify-center border-t-2 border-[#ccc] bg-[#f4f4f4]"
					>
						<svg viewBox="0 0 20 4" className="h-1 w-5" fill="#bbb">
							<path d="M0 0H20V4H0z" />
						</svg>
					</button>
				</div>
				<button
					aria-label="禁用拖动"
					className="mt-5 flex h-[52px] w-full items-center justify-center rounded-md bg-white shadow-[0_2px_10px_rgba(0,0,0,0.3)]"
				>
					<svg viewBox="0 0 34 40" className="h-10 w-[34px]" fill="none" stroke="#777" strokeWidth="2.200" strokeLinecap="round" strokeLinejoin="round">
						<path d="M9 21V6C9 0.500 17 0.500 17 6V14L27 16C30 16.500 31 18 31 21M9 19C5 20 2 22 3.500 26L12 37H17" />
						<circle cx="25.500" cy="30" r="6.500" />
						<path d="M23 33.500L28.500 26.500" />
					</svg>
				</button>
			</div>
		</div>
	)
}

function ChartCard() {
	return (
		<section className="relative mt-[30px] flex flex-1 flex-col bg-white pb-[44px]">
			<div className="flex items-center pt-[22px] pl-[30px] text-[28px] leading-10">
				<h2>图表-客户维度表</h2>
				<button aria-label="重命名" className="ml-[17px]">
					<svg viewBox="0 0 26 26" className="h-[26px] w-[26px]" fill="#0d1440">
						<path d="M13 4L20 10.500L10.500 20.500L4 14.500zM15 2L17.500 0L24 5.500L22 8.500zM1 17.500L7 23.500L1 25zM20 16.500H25.500V19.500H17.500zM14.500 22.500H25.500V25.500H12z" />
					</svg>
				</button>
			</div>
			<div className="mt-6 flex flex-1 pl-[44px]">
				<RegionMap />
				<div className="w-[238px] pt-2.5 pl-6 text-2xl leading-9 text-[#4c5366]">
					<p>客户规模计数</p>
					<p className="mt-2 text-[#adc4f0]">2</p>
					<div className="relative mt-2.5 ml-3.5 h-3 w-[156px] bg-gradient-to-r from-[#8ba6ee] to-[#6580c8]">
						<button
							aria-label="最小值"
							className="absolute -top-1.5 -left-3 h-6 w-6 rounded-full bg-white shadow-[0_0_8px_rgba(80,90,120,0.35)]"
						/>
					</div>
				</div>
			</div>
			<p className="absolute right-5 bottom-4 text-[28px] leading-10">有35个未知地区</p>
			<Frame className="top-2 -right-1 bottom-[31px] -left-[7px]" />
			<Marker n={5} className="-top-[47px] left-[316px]" />
		</section>
	)
}

function FlowPanel() {
	return (
		<aside className="w-[360px] shrink-0 bg-[#f2f4f8] px-[30px] pt-5 text-[28px] leading-10">
			<a href="#preview" className="flex items-center justify-end gap-3 pr-2.5 text-[#02adc0]">
				<svg viewBox="0 0 26 26" className="h-[26px] w-[26px]" fill="none" stroke="#02adc0" strokeWidth="2.500">
					<path d="M6 24.500H1.500V1.500H17.500L24 8V13M7 8H14" />
					<path d="M6 18.500C8 14.500 11.500 13 15.500 13S23.500 14.500 25.500 18.500C23.500 22.500 20 25 15.500 25S8 22.500 6 18.500z" fill="#02adc0" stroke="none" />
					<circle cx="15.700" cy="18.700" r="3" fill="#f2f4f8" stroke="none" />
				</svg>
				<span className="underline decoration-2 underline-offset-4">预览</span>
			</a>
			<button className="mt-5 flex h-[60px] w-full items-center gap-2.5 rounded-l-full rounded-r bg-white">
				<span className="flex h-[60px] w-[60px] items-center justify-center rounded-full bg-[#cceef2]">
					<svg viewBox="0 0 28 22" className="h-[22px] w-7" fill="none" stroke="#02adc0" strokeWidth="3">
						<path d="M1 3H21M1 9H15M1 15H9M12 16L18 20L26.500 5" />
					</svg>
				</span>
				选字段
			</button>
			<div className="flex w-[60px] flex-col items-center">
				<span className="h-[60px] w-0.5 bg-[#02adc0]" />
				<button aria-label="添加步骤" className="flex h-[60px] w-[60px] items-center justify-center rounded-full bg-[#02adc0]">
					<svg viewBox="0 0 20 20" className="h-5 w-5" stroke="#fff" strokeWidth="2">
						<path d="M10 1V19M1 10H19" />
					</svg>
				</button>
				<span className="h-[60px] w-0.5 bg-[#02adc0]" />
			</div>
			<div className="border-2 border-[#02adc0] bg-white p-1">
				<div className="flex h-12 items-center rounded bg-[#02adc0] pr-[18px] pl-2.5 text-white">
					<svg viewBox="0 0 28 24" className="h-6 w-7" fill="none" stroke="#fff" strokeWidth="3">
						<path d="M1.500 1.500H26.500V22.500H1.500zM8.500 10V18M14 6V18M20 12.500V18" />
					</svg>
					<span className="ml-[30px] flex-1 whitespace-nowrap">图表-客户...</span>
					<button aria-label="更多操作">
						<svg viewBox="0 0 4 24" className="h-6 w-1" fill="#fff">
							<path d="M0 0H4V4H0zM0 10H4V14H0zM0 20H4V24H0z" />
						</svg>
					</button>
				</div>
			</div>
		</aside>
	)
}

export default function App() {
	return (
		<div className="flex min-h-screen flex-col bg-[#8c8c8c] pb-px font-['Noto_Sans_CJK_SC',sans-serif] font-[350] text-[#0d1440]">
			<div className="relative flex flex-1 flex-col overflow-hidden rounded-b-xl bg-[#f6f8fb]">
				<Header />
				<Toolbar />
				<main className="flex flex-1">
					<FieldPanel />
					<ConfigPanel />
					<div className="flex flex-1 flex-col px-[30px] py-[30px]">
						<h2 className="text-[28px] leading-10 font-bold">筛选</h2>
						<div className="mt-[17px] flex h-[203px] items-center justify-center bg-white text-[28px] leading-10 text-[#8a8ea6]">
							拖拽左侧字段到此处，对原始数据进行筛选
						</div>
						<ChartCard />
					</div>
					<FlowPanel />
				</main>
				<button
					aria-label="在线客服"
					className="absolute right-0 bottom-0 z-20 flex h-20 w-20 items-center justify-center rounded-full bg-[#02adc0] shadow-[0_0_28px_rgba(40,50,80,0.25)]"
				>
					<svg viewBox="0 0 40 36" className="h-9 w-10" fill="none" stroke="#fff" strokeWidth="2.200">
						<path d="M4 15V13C4 6 8 1.500 14 1.500H26C32 1.500 36 6 36 13V19C36 28 32 32.500 21 33" />
						<rect x="8" y="5" width="24" height="24" rx="7" fill="#fff" stroke="none" />
						<path d="M11 20.500H29C27 24.500 24 25.500 20 25.500S13 24.500 11 20.500z" fill="#02adc0" stroke="none" />
						<rect x="1" y="14" width="4.500" height="12" rx="2.200" fill="#fff" stroke="none" />
						<rect x="34.500" y="14" width="4.500" height="12" rx="2.200" fill="#fff" stroke="none" />
						<circle cx="21" cy="33" r="2.800" fill="#fff" stroke="none" />
					</svg>
				</button>
			</div>
		</div>
	)
}
